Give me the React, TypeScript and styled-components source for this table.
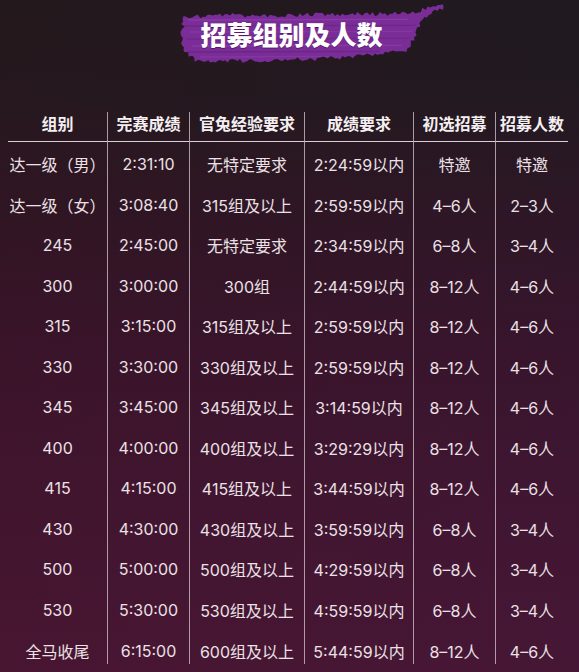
import styled, { createGlobalStyle } from 'styled-components';

const GlobalStyle = createGlobalStyle`
  html, body {
    margin: 0;
    padding: 0;
    background: #1d191b;
  }
  body {
    font-family: Inter, "Noto Sans CJK SC", sans-serif;
  }
`;

const Page = styled.div`
  width: 579px;
  height: 672px;
  overflow: hidden;
  background:
    linear-gradient(90deg, rgba(80, 10, 30, 0.12) 0%, rgba(60, 20, 70, 0.08) 100%),
    linear-gradient(
      180deg,
      #1d1a1c 0%,
      #201a1e 14%,
      #2b1723 30%,
      #36152a 50%,
      #3f1630 72%,
      #471734 100%
    );
  color: #ece3e8;
`;

const TitleBar = styled.header`
  box-sizing: border-box;
  height: 112px;
  padding-top: 19px;
  display: flex;
  justify-content: center;
  align-items: flex-start;
`;

const Title = styled.h1`
  position: relative;
  margin: 0 0 0 4px;
  font-family: "Noto Sans CJK SC", sans-serif;
  font-weight: 900;
  font-size: 26px;
  line-height: 30px;
  color: #ffffff;
`;

const TitleText = styled.span`
  position: relative;
  text-shadow: 0 1px 0 rgba(60, 10, 70, 0.6);
`;

const Brush = styled.svg`
  position: absolute;
  left: -20px;
  top: -17px;
  width: 265px;
  height: 62px;
`;

const Table = styled.div`
  display: grid;
  grid-template-columns: 99px 82px 115px 109px 82px 73px;
  margin-left: 8px;
`;

const HeadCell = styled.div<{ $first?: boolean }>`
  box-sizing: border-box;
  height: 30px;
  padding-bottom: 7px;
  display: flex;
  align-items: center;
  justify-content: center;
  border-bottom: 1px solid #d9ced3;
  border-left: ${p => (p.$first ? 'none' : '1px solid rgba(214, 200, 207, 0.75)')};
  font-family: "Noto Sans CJK SC", sans-serif;
  font-weight: 700;
  font-size: 16px;
  color: #f4eff1;
  white-space: nowrap;
`;

const Cell = styled.div<{ $first?: boolean; $last?: boolean }>`
  box-sizing: border-box;
  height: ${p => (p.$last ? '36px' : '40.5px')};
  padding-top: ${p => (p.$last ? '10px' : '4px')};
  display: flex;
  align-items: center;
  justify-content: center;
  border-left: ${p => (p.$first ? 'none' : '1px solid rgba(214, 200, 207, 0.75)')};
  font-size: 16px;
  color: #ebe1e6;
  white-space: nowrap;
`;

const headers = ['组别', '完赛成绩', '官兔经验要求', '成绩要求', '初选招募', '招募人数'];

const rows: string[][] = [
  ['达一级（男）', '2:31:10', '无特定要求', '2:24:59以内', '特邀', '特邀'],
  ['达一级（女）', '3:08:40', '315组及以上', '2:59:59以内', '4–6人', '2–3人'],
  ['245', '2:45:00', '无特定要求', '2:34:59以内', '6–8人', '3–4人'],
  ['300', '3:00:00', '300组', '2:44:59以内', '8–12人', '4–6人'],
  ['315', '3:15:00', '315组及以上', '2:59:59以内', '8–12人', '4–6人'],
  ['330', '3:30:00', '330组及以上', '2:59:59以内', '8–12人', '4–6人'],
  ['345', '3:45:00', '345组及以上', '3:14:59以内', '8–12人', '4–6人'],
  ['400', '4:00:00', '400组及以上', '3:29:29以内', '8–12人', '4–6人'],
  ['415', '4:15:00', '415组及以上', '3:44:59以内', '8–12人', '4–6人'],
  ['430', '4:30:00', '430组及以上', '3:59:59以内', '6–8人', '3–4人'],
  ['500', '5:00:00', '500组及以上', '4:29:59以内', '6–8人', '3–4人'],
  ['530', '5:30:00', '530组及以上', '4:59:59以内', '6–8人', '3–4人'],
  ['全马收尾', '6:15:00', '600组及以上', '5:44:59以内', '8–12人', '4–6人'],
];

// outline of the paint stroke behind the title, roughened below
const brushOutline: [number, number][] = [
  [3, 15], [40, 13], [90, 14], [140, 12], [190, 12], [230, 11],
  [248, 6], [263, 2], [262, 6], [244, 15], [238, 26], [234, 38],
  [226, 48], [200, 51], [170, 55], [130, 57], [90, 58], [50, 59],
  [16, 58], [5, 50], [2, 34],
];

function noise(k: number) {
  const v = Math.sin(k * 12.9898 + 4.1) * 43758.5453;
  return v - Math.floor(v) - 0.5;
}

function roughPath(points: [number, number][], step = 2.5, amp = 2.2) {
  let d = '';
  let k = 0;
  points.forEach(([ax, ay], i) => {
    const [bx, by] = points[(i + 1) % points.length];
    const dx = bx - ax;
    const dy = by - ay;
    const len = Math.hypot(dx, dy) || 1;
    const segs = Math.max(1, Math.round(len / step));
    const nx = -dy / len;
    const ny = dx / len;
    for (let s = 0; s < segs; s++) {
      const t = s / segs;
      const r = noise(k++) * 2 * amp;
      const x = ax + dx * t + nx * r;
      const y = ay + dy * t + ny * r;
      d += `${d ? 'L' : 'M'}${x.toFixed(1)} ${y.toFixed(1)} `;
    }
  });
  return d + 'Z';
}

const streaks = [
  { y: 18, x1: 8, x2: 228, c: '#9446b4', o: 0.55 },
  { y: 24, x1: 4, x2: 236, c: '#5d2078', o: 0.45 },
  { y: 30, x1: 10, x2: 232, c: '#9446b4', o: 0.4 },
  { y: 37, x1: 6, x2: 230, c: '#5d2078', o: 0.4 },
  { y: 44, x1: 12, x2: 222, c: '#9446b4', o: 0.45 },
  { y: 50, x1: 8, x2: 200, c: '#5d2078', o: 0.5 },
  { y: 55, x1: 20, x2: 150, c: '#9446b4', o: 0.35 },
];

function BrushStroke() {
  return (
    <Brush viewBox="0 0 265 62" aria-hidden="true">
      <path d={roughPath(brushOutline)} fill="#7a2d97" />
      {streaks.map(s => (
        <line
          key={s.y}
          x1={s.x1}
          x2={s.x2}
          y1={s.y}
          y2={s.y - 0.6}
          stroke={s.c}
          strokeOpacity={s.o}
          strokeWidth={1.4}
        />
      ))}
    </Brush>
  );
}

export default function App() {
  return (
    <Page>
      <GlobalStyle />
      <TitleBar>
        <Title>
          <BrushStroke />
          <TitleText>招募组别及人数</TitleText>
        </Title>
      </TitleBar>
      <Table>
        {headers.map((h, i) => (
          <HeadCell key={h} $first={i === 0}>
            {h}
          </HeadCell>
        ))}
        {rows.map((row, r) =>
          row.map((value, i) => (
            <Cell
              key={`${row[0]}-${i}`}
              $first={i === 0}
              $last={r === rows.length - 1}
            >
              {value}
            </Cell>
          )),
        )}
      </Table>
    </Page>
  );
}
